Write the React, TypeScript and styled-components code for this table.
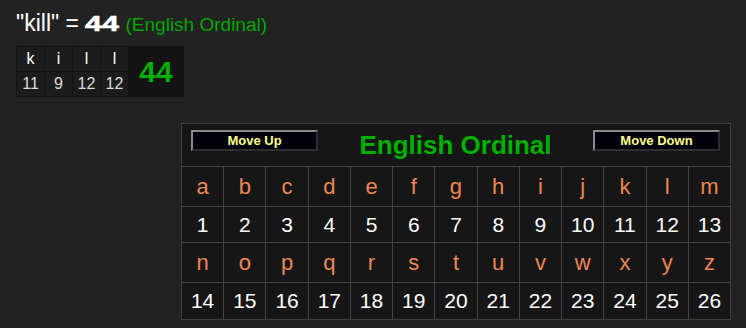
import React from "react";
import styled, { createGlobalStyle } from "styled-components";

const Global = createGlobalStyle`
  html, body { margin: 0; padding: 0; background: #222222; }
  body { font-family: "Liberation Sans", Arial, sans-serif; color: #ffffff; }
`;

const Page = styled.div`
  width: 746px;
  height: 328px;
  box-sizing: border-box;
  padding: 10px 0 0 16px;
  overflow: hidden;
`;

const Headline = styled.div`
  font-size: 23px;
  line-height: 27px;
  height: 27px;
  white-space: nowrap;
  color: #ffffff;
`;

const Total = styled.span`
  display: inline-block;
  font-weight: bold;
  font-size: 22px;
  line-height: 22px;
  transform: scaleX(1.38);
  transform-origin: left center;
  margin-right: 9.3px;
  -webkit-text-stroke: 0.6px #ffffff;
`;

const CipherName = styled.span`
  font-size: 19px;
  color: #00a800;
`;

const MiniTable = styled.div`
  display: flex;
  gap: 1px;
  padding: 1px;
  margin-top: 9px;
  width: fit-content;
  background: #131313;
`;

const LetterGrid = styled.div`
  display: grid;
  grid-template-columns: repeat(4, 27px);
  grid-auto-rows: 24px;
  gap: 1px;
`;

const MiniCell = styled.div<{ $dim?: boolean }>`
  background: #1c1c1c;
  display: flex;
  align-items: center;
  justify-content: center;
  font-size: 16px;
  line-height: 18px;
  color: ${(p) => (p.$dim ? "#dddddd" : "#ffffff")};
`;

const MiniTotal = styled.div`
  width: 54px;
  display: flex;
  align-items: center;
  justify-content: center;
  font-size: 30px;
  line-height: 34px;
  font-weight: bold;
  color: #00b000;
`;

const Board = styled.div`
  width: 550px;
  box-sizing: border-box;
  margin: 26px 0 0 165px;
  border: 1px solid #3e3e3e;
  background: #161616;
`;

const BoardHeader = styled.div`
  height: 42px;
  box-sizing: border-box;
  display: flex;
  justify-content: space-between;
  align-items: flex-start;
  padding: 6px 10px 0 9px;
`;

const NavButton = styled.button`
  width: 127px;
  height: 21px;
  box-sizing: border-box;
  padding: 0;
  border: 2px solid;
  border-color: #8a8a8a #2e2e2e #2e2e2e #8a8a8a;
  background: #00000c;
  color: #ffff8a;
  font-family: "Liberation Sans", Arial, sans-serif;
  font-weight: bold;
  font-size: 13px;
  line-height: 15px;
`;

const Title = styled.div`
  font-size: 26px;
  line-height: 30px;
  font-weight: bold;
  color: #00b000;
`;

const Grid = styled.div`
  display: grid;
  grid-template-columns: repeat(13, 1fr);
  grid-template-rows: 39px 35px 39px 36px;
  gap: 1px;
  padding-top: 1px;
  background: #444444;
`;

const Cell = styled.div<{ $letter?: boolean }>`
  background: #161616;
  display: flex;
  align-items: center;
  justify-content: center;
  font-size: ${(p) => (p.$letter ? "22px" : "21px")};
  color: ${(p) => (p.$letter ? "#ef8654" : "#ffffff")};
`;

const word = [
  { ch: "k", v: 11 },
  { ch: "i", v: 9 },
  { ch: "l", v: 12 },
  { ch: "l", v: 12 },
];

const alphabet = "abcdefghijklmnopqrstuvwxyz".split("");

export default function App() {
  const halves = [alphabet.slice(0, 13), alphabet.slice(13)];
  return (
    <>
      <Global />
      <Page>
        <Headline>
          "kill" = <Total>44</Total> <CipherName>(English Ordinal)</CipherName>
        </Headline>
        <MiniTable>
          <LetterGrid>
            {word.map((w, i) => (
              <MiniCell key={"l" + i}>{w.ch}</MiniCell>
            ))}
            {word.map((w, i) => (
              <MiniCell key={"v" + i} $dim>
                {w.v}
              </MiniCell>
            ))}
          </LetterGrid>
          <MiniTotal>44</MiniTotal>
        </MiniTable>
        <Board>
          <BoardHeader>
            <NavButton>Move Up</NavButton>
            <Title>English Ordinal</Title>
            <NavButton>Move Down</NavButton>
          </BoardHeader>
          <Grid>
            {halves.map((half, h) => (
              <React.Fragment key={h}>
                {half.map((c) => (
                  <Cell key={c} $letter>
                    {c}
                  </Cell>
                ))}
                {half.map((c, i) => (
                  <Cell key={c + "n"}>{h * 13 + i + 1}</Cell>
                ))}
              </React.Fragment>
            ))}
          </Grid>
        </Board>
      </Page>
    </>
  );
}
